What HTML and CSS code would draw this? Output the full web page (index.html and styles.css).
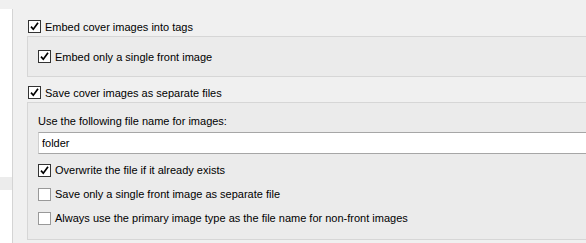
FILE: index.html
```html
<!DOCTYPE html>
<html lang="en">
<head>
    <meta charset="UTF-8">
    <title>Cover options</title>
    <link rel="stylesheet" href="styles.css">
</head>
<body>

<div class="layout">
    <!-- left list, mostly cut off -->
    <div class="sidebar">
        <div class="sidebar-gap"></div>
        <div class="sidebar-sel"></div>
    </div>

    <div class="content">
        <label class="row row-top">
            <span class="box checked"><svg viewBox="0 0 11 11"><path d="M2 5.6 L4.3 8.2 L9 1.8"/></svg></span>
            Embed cover images into tags
        </label>

        <div class="group group-embed">
            <label class="row row-inner">
                <span class="box checked"><svg viewBox="0 0 11 11"><path d="M2 5.6 L4.3 8.2 L9 1.8"/></svg></span>
                Embed only a single front image
            </label>
        </div>

        <label class="row row-save">
            <span class="box checked"><svg viewBox="0 0 11 11"><path d="M2 5.6 L4.3 8.2 L9 1.8"/></svg></span>
            Save cover images as separate files
        </label>

        <div class="group group-files">
            <div class="field-label">Use the following file name for images:</div>
            <input class="field" type="text" value="folder">
            <label class="row row-opt">
                <span class="box checked"><svg viewBox="0 0 11 11"><path d="M2 5.6 L4.3 8.2 L9 1.8"/></svg></span>
                Overwrite the file if it already exists
            </label>
            <label class="row row-opt">
                <span class="box"></span>
                Save only a single front image as separate file
            </label>
            <label class="row row-opt">
                <span class="box"></span>
                Always use the primary image type as the file name for non-front images
            </label>
        </div>
    </div>
</div>

</body>
</html>
```

FILE: styles.css
```css
body {
    margin: 0;
    background-color: #f0f0f0;
    font-family: "Liberation Sans", Arial, sans-serif;
    font-size: 11px;
    color: #000;
}

.layout {
    display: flex;
    height: 243px;
    overflow: hidden;
}

/* list on the left */
.sidebar {
    width: 12px;
    margin-top: 9px;
    background-color: #fff;
    border-right: 1px solid #d4d4d4;
    display: flex;
    flex-direction: column;
}

.sidebar-gap {
    height: 168px;
}

.sidebar-sel {
    height: 13px;
    background-color: #ececec;
}

.content {
    flex: 1;
    padding-left: 14px;
}

/* checkbox rows */
.row {
    display: flex;
    align-items: center;
    gap: 4px;
    white-space: nowrap;
}

.row-top {
    height: 36px;
    align-items: flex-end;
    padding-left: 1px;
    padding-bottom: 3px;
    box-sizing: border-box;
}

.row-save {
    height: 25px;
    align-items: flex-end;
    padding-left: 1px;
    padding-bottom: 3px;
    box-sizing: border-box;
}

.row-inner {
    height: 39px;
    padding-left: 10px;
}

.row-opt {
    height: 24px;
    padding-left: 10px;
}

.box {
    width: 11px;
    height: 11px;
    border: 1px solid #999;
    background-color: #fff;
    display: inline-block;
    flex: none;
}

.box.checked {
    border-color: #333;
}

.box svg {
    display: block;
    width: 11px;
    height: 11px;
}

.box path {
    fill: none;
    stroke: #000;
    stroke-width: 1.7;
}

/* grouped sub-options */
.group {
    background-color: #ebebeb;
    border: 1px solid #d6d6d6;
    border-right: none;
}

.group-files {
    padding-bottom: 9px;
}

.field-label {
    padding: 10px 0 0 10px;
    height: 19px;
    line-height: 16px;
}

.field {
    display: block;
    box-sizing: border-box;
    width: calc(100% - 10px);
    height: 22px;
    margin: 0 0 4px 10px;
    padding: 0 3px;
    border: 1px solid #a6a6a6;
    border-left-color: #cfcfcf;
    border-right: none;
    background-color: #fff;
    font-family: inherit;
    font-size: 11px;
    outline: none;
}
```
